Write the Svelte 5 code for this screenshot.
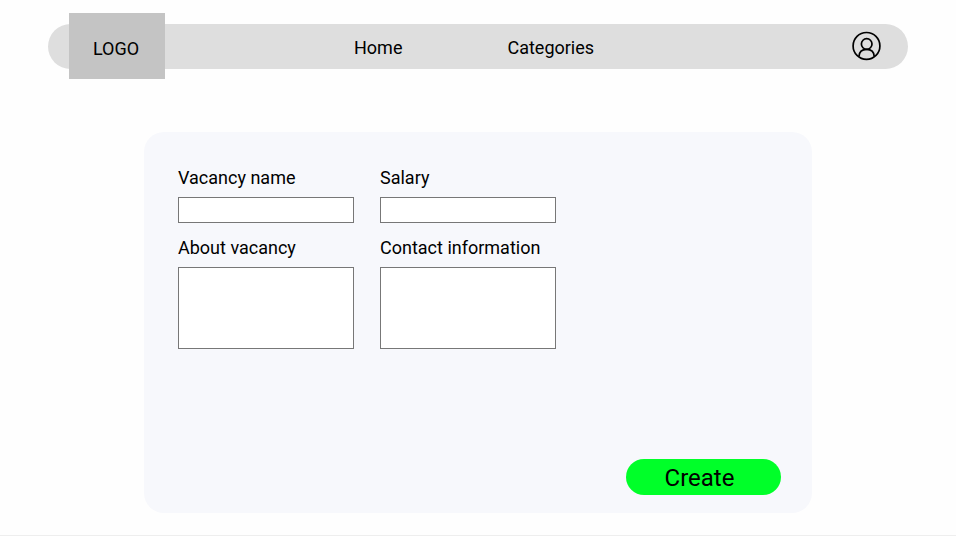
<script>
  const fields = [
    { id: 'name', label: 'Vacancy name' },
    { id: 'salary', label: 'Salary' },
    { id: 'about', label: 'About vacancy', tall: true },
    { id: 'contact', label: 'Contact information', tall: true }
  ];
</script>

<div class="page">
  <header>
    <div class="logo">LOGO</div>
    <nav>
      <a class="home" href="#home">Home</a>
      <a class="categories" href="#categories">Categories</a>
    </nav>
    <svg class="user" viewBox="0 0 30 30" fill="none" stroke="#000" stroke-width="1.7" aria-label="Profile">
      <circle cx="15.5" cy="14.9" r="13.4" />
      <circle cx="15.7" cy="13" r="5.3" />
      <path d="M8 25.5C8.2 21.1 11.1 18.4 15.6 18.4S23 21.1 23.2 25.5" />
    </svg>
  </header>

  <main>
    <form onsubmit={(e) => e.preventDefault()}>
      <div class="fields">
        {#each fields as field (field.id)}
          <div class="field">
            <label for={field.id}>{field.label}</label>
            {#if field.tall}
              <textarea id={field.id}></textarea>
            {:else}
              <input id={field.id} type="text" />
            {/if}
          </div>
        {/each}
      </div>
      <button type="submit">Create</button>
    </form>
  </main>
</div>

<style>
  .page {
    box-sizing: border-box;
    width: 956px;
    height: 536px;
    padding-top: 23.5px;
    background: #fefefe;
    border-bottom: 1px solid #eee;
    font-family: Roboto, sans-serif;
    font-size: 18px;
    line-height: 21px;
    color: #000;
  }

  header {
    display: flex;
    align-items: center;
    box-sizing: border-box;
    width: 860px;
    height: 45.5px;
    margin-left: 48px;
    padding: 0 27px 0 21px;
    border-radius: 23px;
    background: #dedede;
  }

  .logo {
    display: flex;
    flex: none;
    align-items: center;
    box-sizing: border-box;
    width: 96px;
    height: 66px;
    padding: 4px 0 0 24px;
    background: #c4c4c4;
  }

  nav {
    display: flex;
    gap: 105px;
    margin-left: 189px;
    padding-top: 3px;
  }

  a {
    color: inherit;
    text-decoration: none;
  }

  .user {
    width: 30px;
    height: 30px;
    margin-left: auto;
  }

  form {
    display: flex;
    flex-direction: column;
    justify-content: space-between;
    box-sizing: border-box;
    width: 668px;
    height: 381px;
    margin: 63px auto 0;
    padding: 35px 31px 18px 34px;
    border-radius: 20px;
    background: #f7f8fc;
  }

  .fields {
    display: grid;
    grid-template-columns: 176px 176px;
    gap: 14px 26px;
  }

  .field {
    display: flex;
    flex-direction: column;
    gap: 9px;
  }

  label {
    white-space: nowrap;
  }

  input,
  textarea {
    box-sizing: border-box;
    width: 176px;
    height: 26px;
    margin: 0;
    padding: 2px 6px;
    border: 1px solid #777;
    border-radius: 0;
    background: #fff;
    font: inherit;
    resize: none;
  }

  textarea {
    height: 82px;
  }

  button {
    align-self: flex-end;
    width: 155px;
    height: 36px;
    padding: 2px 8px 0 0;
    border: 0;
    border-radius: 18px;
    background: #00ff29;
    color: #000;
    font-family: inherit;
    font-size: 24px;
    line-height: 28px;
  }
</style>
